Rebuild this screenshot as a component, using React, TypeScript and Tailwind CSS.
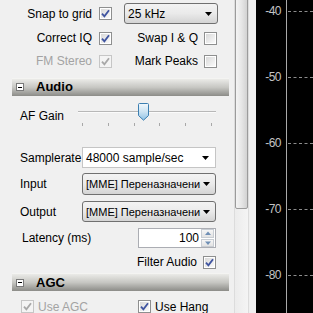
import React from "react";

// Win7-style settings panel beside a black dB scale.
const DB_LABELS = ["-40", "-50", "-60", "-70", "-80"];

const Check: React.FC<{ checked?: boolean; disabled?: boolean }> = ({
  checked = false,
  disabled = false,
}) => (
  <div
    className={`w-[13px] h-[13px] shrink-0 border p-[1px] ${disabled ? "border-[#c6c6c6] bg-[#f4f4f4]" : "border-[#8e8f8f] bg-white"}`}
  >
    <div
      className={`w-full h-full flex items-center justify-center ${disabled ? "bg-[#f4f4f4]" : "bg-linear-to-br from-[#d9d9d9] to-[#fafafa]"}`}
    >
      {checked && (
        <svg width="9" height="9" viewBox="0 0 9 9">
          <path
            d="M1 4.6 L3.4 7.4 L8 1.2"
            fill="none"
            stroke={disabled ? "#a8a8a8" : "#3f54a0"}
            strokeWidth={1.8}
          />
        </svg>
      )}
    </div>
  </div>
);

const Arrow = () => (
  <svg width="7" height="4" viewBox="0 0 7 4" className="shrink-0">
    <path d="M0 0 H7 L3.5 4 Z" fill="#000" />
  </svg>
);

const ButtonCombo: React.FC<{ text: string; className?: string }> = ({
  text,
  className = "",
}) => (
  <div
    className={`flex items-center rounded-[3px] border border-[#707070] bg-linear-to-b from-[#f3f3f3] via-[#eaeaea] to-[#d4d4d4] pl-[3px] pr-[5px] ${className}`}
  >
    <div className="flex-1 whitespace-nowrap">{text}</div>
    <Arrow />
  </div>
);

const SectionHeader: React.FC<{ title: string }> = ({ title }) => (
  <div className="ml-[12px] w-[217px] h-[18px] flex items-center bg-linear-to-b from-[#ebebe8] via-[#c6c6c2] to-[#8c8c88] border-t border-[#f4f4f2]">
    <div className="ml-[4px] w-[8px] h-[8px] border border-[#7a7a7a] bg-white flex items-center justify-center">
      <div className="w-[4px] h-[1px] bg-black" />
    </div>
    <span className="ml-[12px] font-bold text-[13px]">{title}</span>
  </div>
);

export default function App() {
  return (
    <div className="w-[313px] h-[313px] overflow-hidden flex bg-[#f0f0f0] text-[12px] text-black font-['Liberation_Sans',Arial,sans-serif] leading-[14px]">
      {/* settings panel */}
      <div className="w-[234px] shrink-0 flex flex-col pt-[3px]">
        <div className="h-[22px] flex items-center">
          <span className="w-[92px] text-right">Snap to grid</span>
          <div className="ml-[7px]">
            <Check checked />
          </div>
          <ButtonCombo text="25 kHz" className="ml-[12px] w-[94px] h-[21px]" />
        </div>
        <div className="h-[22px] mt-[3px] flex items-center">
          <span className="w-[92px] text-right">Correct IQ</span>
          <div className="ml-[7px]">
            <Check checked />
          </div>
          <span className="w-[86px] text-right">Swap I &amp; Q</span>
          <div className="ml-[6px]">
            <Check />
          </div>
        </div>
        <div className="h-[22px] mt-[1px] flex items-center">
          <span className="w-[92px] text-right text-[#a3a3a3]">FM Stereo</span>
          <div className="ml-[7px]">
            <Check checked disabled />
          </div>
          <span className="w-[86px] text-right">Mark Peaks</span>
          <div className="ml-[6px]">
            <Check />
          </div>
        </div>

        <div className="mt-[6px]">
          <SectionHeader title="Audio" />
        </div>

        <div className="h-[40px] flex">
          <div className="w-[78px] pl-[20px] pt-[13px]">AF Gain</div>
          <div className="w-[138px] relative">
            <div className="absolute left-0 right-0 top-[15px] h-[1px] bg-[#b8b8b8]" />
            <div className="absolute left-0 right-0 top-[16px] h-[1px] bg-[#fbfbfb]" />
            <svg
              width="11"
              height="18"
              viewBox="0 0 11 18"
              className="absolute left-[60px] top-[7px]"
            >
              <defs>
                <linearGradient id="th" x1="0" y1="0" x2="0" y2="1">
                  <stop offset="0" stopColor="#f2f8fc" />
                  <stop offset="0.5" stopColor="#cbe3f3" />
                  <stop offset="1" stopColor="#8fc2e6" />
                </linearGradient>
              </defs>
              <path
                d="M1.5 0.5 H9.5 Q10.5 0.5 10.5 1.5 V12.5 L5.5 17.2 L0.5 12.5 V1.5 Q0.5 0.5 1.5 0.5 Z"
                fill="url(#th)"
                stroke="#3c7fb1"
              />
            </svg>
            <div className="absolute left-[4px] w-[130px] top-[27px] flex justify-between">
              {[0, 1, 2, 3, 4, 5].map((i) => (
                <div key={i} className="w-[1px] h-[3px] bg-[#a8a8a8]" />
              ))}
            </div>
          </div>
        </div>

        <div className="mt-[12px] h-[21px] flex items-center">
          <span className="w-[82px] pl-[20px]">Samplerate</span>
          <div className="w-[134px] h-[21px] flex items-center border border-[#c5c5c5] bg-white pl-[3px] pr-[6px]">
            <div className="flex-1 whitespace-nowrap">48000 sample/sec</div>
            <Arrow />
          </div>
        </div>
        <div className="mt-[5px] h-[22px] flex items-center">
          <span className="w-[82px] pl-[20px]">Input</span>
          <ButtonCombo text="[MME] Переназначени" className="w-[134px] h-[22px] text-[11px]" />
        </div>
        <div className="mt-[6px] h-[21px] flex items-center">
          <span className="w-[82px] pl-[20px]">Output</span>
          <ButtonCombo text="[MME] Переназначени" className="w-[134px] h-[21px] text-[11px]" />
        </div>
        <div className="mt-[6px] h-[20px] flex items-center">
          <span className="w-[138px] pl-[22px]">Latency (ms)</span>
          <div className="w-[78px] h-[20px] flex items-center border border-[#abadb3] bg-white">
            <div className="flex-1 text-right pr-[2px]">100</div>
            <div className="w-[13px] h-[18px] flex flex-col gap-[1px] mr-[1px]">
              {["M1 4 L4 0.5 L7 4 Z", "M1 0.5 L4 4 L7 0.5 Z"].map((d) => (
                <div
                  key={d}
                  className="flex-1 flex items-center justify-center border border-[#c8cdd3] bg-linear-to-b from-[#f6f6f6] to-[#e3e3e3]"
                >
                  <svg width="8" height="5" viewBox="0 0 8 5">
                    <path d={d} fill="#6f8fb5" />
                  </svg>
                </div>
              ))}
            </div>
          </div>
        </div>
        <div className="mt-[4px] h-[20px] flex items-center">
          <span className="w-[197px] text-right">Filter Audio</span>
          <div className="ml-[6px]">
            <Check checked />
          </div>
        </div>

        <div className="mt-[1px]">
          <SectionHeader title="AGC" />
        </div>

        <div className="mt-[9px] h-[13px] flex items-center">
          <div className="ml-[21px]">
            <Check checked disabled />
          </div>
          <span className="ml-[4px] w-[100px] text-[#a3a3a3]">Use AGC</span>
          <Check checked />
          <span className="ml-[4px]">Use Hang</span>
        </div>
      </div>

      {/* scrollbar */}
      <div className="w-[15px] shrink-0 flex flex-col border-x border-[#dcdcdc] bg-linear-to-r from-[#ececec] to-[#f4f4f4]">
        <div className="h-[211px] -mt-[2px] rounded-b-[2px] border border-[#9b9b9b] bg-linear-to-r from-[#f4f4f4] via-[#e6e6e6] to-[#d2d2d2]" />
      </div>
      <div className="w-[7px] shrink-0" />

      {/* dB scale */}
      <div className="flex-1 flex bg-black text-[#c4c4c4]">
        <div className="w-[30px] flex flex-col -mt-[22px]">
          {DB_LABELS.map((l) => (
            <div key={l} className="h-[66px] shrink-0 flex items-center justify-end pr-[5px] tracking-[-0.5px]">
              {l}
            </div>
          ))}
        </div>
        <div className="flex-1 border-l border-[#a9a9a9] flex flex-col -mt-[22px]">
          {DB_LABELS.map((l) => (
            <div key={l} className="h-[66px] shrink-0 flex items-center pl-[1px]">
              <div className="w-full border-t border-dashed border-[#8c8c8c]" />
            </div>
          ))}
        </div>
      </div>
    </div>
  );
}
